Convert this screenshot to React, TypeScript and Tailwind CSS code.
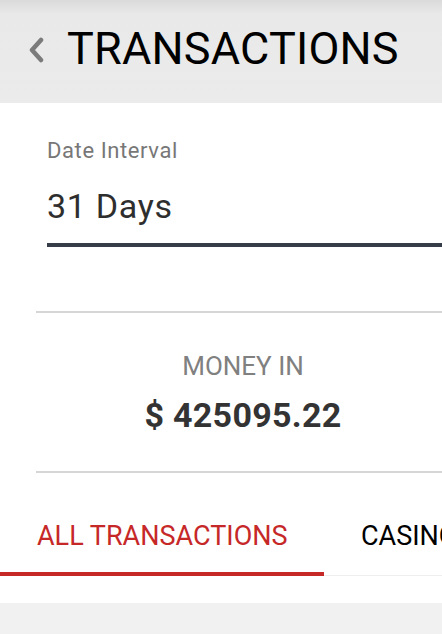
import React from 'react'

const roboto = { fontFamily: 'Roboto, "Liberation Sans", sans-serif' }

function BackChevron() {
  return (
    <svg width="16" height="26" viewBox="0 0 16 26" fill="none" className="shrink-0 mt-[11px]">
      <path d="M13 3 L4 13 L13 23" stroke="#7b7b7b" strokeWidth={4.5} strokeLinecap="round" strokeLinejoin="round" />
    </svg>
  )
}

export default function App() {
  return (
    <div style={roboto} className="w-[442px] h-[634px] overflow-hidden bg-white flex flex-col">
      {/* Header */}
      <header className="h-[103px] shrink-0 flex items-start pl-[28px] pt-[26px] bg-[linear-gradient(to_bottom,#dadada,#e9e9e9_14px,#ebebeb)]">
        <BackChevron />
        <h1 className="ml-[23px] text-[45px] leading-none text-black tracking-[0.2px]">TRANSACTIONS</h1>
      </header>

      {/* Date interval */}
      <div className="pl-[36px]">
        <div className="pl-[11px] pt-[37px]">
          <div className="text-[22px] leading-none text-[#777] tracking-[0.6px]">Date Interval</div>
          <div className="mt-[27px] text-[34px] leading-none text-[#2e2e2e] tracking-[0.7px]">31 Days</div>
          <div className="mt-[20px] h-[4px] bg-[#363d49]" />
        </div>

        <div className="mt-[64px] h-[2px] bg-[#d6d6d6]" />

        {/* Money in */}
        <div className="pl-[8px] flex flex-col items-center">
          <div className="mt-[40px] text-[26px] leading-none text-[#808080]">MONEY IN</div>
          <div className="mt-[19px] text-[34px] leading-none font-bold text-[#333] tracking-[0.3px]">$ 425095.22</div>
        </div>

        <div className="mt-[39px] h-[2px] bg-[#d6d6d6]" />
      </div>

      {/* Tabs */}
      <div className="mt-[50px] flex whitespace-nowrap">
        <div className="w-[324px] shrink-0 pl-[37px] pb-[22px] border-b-4 border-[#c62828]">
          <span className="text-[27px] leading-none block text-[#c62828]">ALL TRANSACTIONS</span>
        </div>
        <div className="flex-1 pl-[37px] pb-[25px] border-b border-[#eeeeee]">
          <span className="text-[27px] leading-none block text-black">CASINO</span>
        </div>
      </div>

      <div className="h-[27px] shrink-0 bg-white" />
      <div className="flex-1 bg-[#f1f1f1]" />
    </div>
  )
}
